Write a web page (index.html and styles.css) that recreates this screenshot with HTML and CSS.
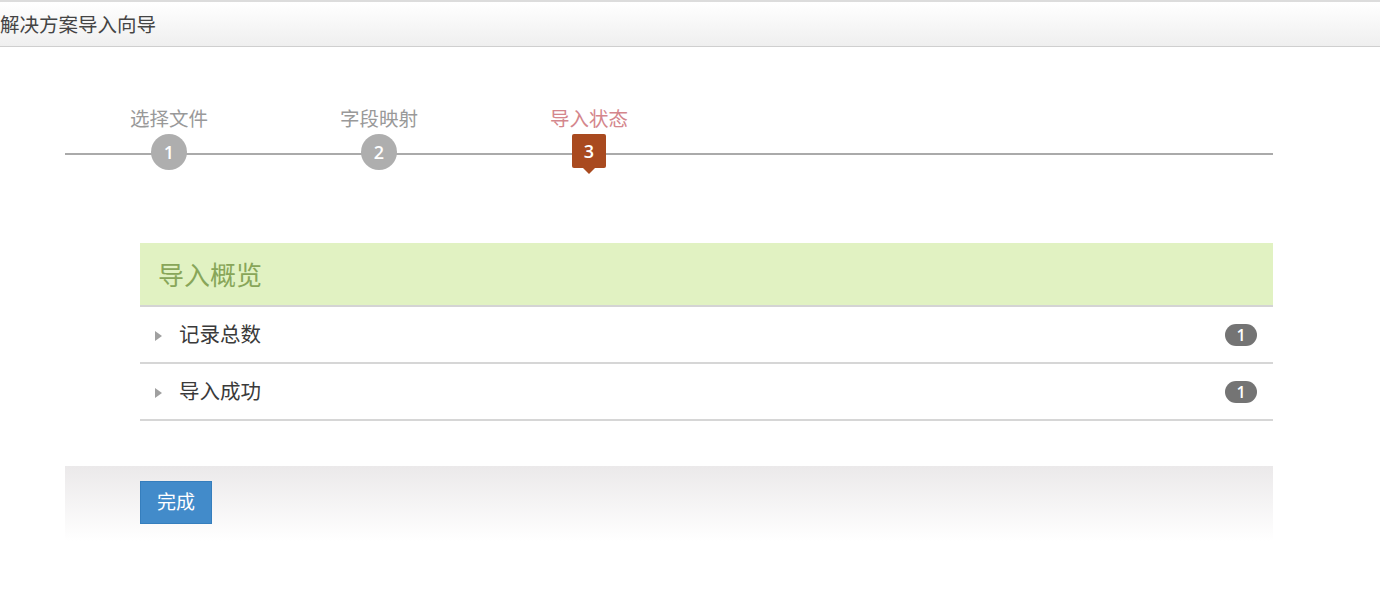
FILE: index.html
```html
<!DOCTYPE html>
<html lang="zh">
<head>
<meta charset="utf-8">
<title>解决方案导入向导</title>
<link rel="stylesheet" href="styles.css">
</head>
<body>
<div class="topbar">解决方案导入向导</div>
<div class="wizard">
  <ul class="steps">
    <li class="step done"><span class="step-label">选择文件</span><span class="step-num">1</span></li>
    <li class="step done"><span class="step-label">字段映射</span><span class="step-num">2</span></li>
    <li class="step active"><span class="step-label">导入状态</span><span class="step-num">3</span></li>
  </ul>
  <div class="panel">
    <div class="panel-head">导入概览</div>
    <div class="panel-row"><span class="caret"></span><span class="row-text">记录总数</span><span class="badge">1</span></div>
    <div class="panel-row"><span class="caret"></span><span class="row-text">导入成功</span><span class="badge">1</span></div>
  </div>
  <div class="actions">
    <button class="btn" type="button">完成</button>
  </div>
</div>
</body>
</html>
```
FILE: styles.css
```css
html, body {
  margin: 0;
  padding: 0;
  background: #fff;
}
body {
  font-family: "Noto Sans CJK SC", "Noto Sans", sans-serif;
  color: #333;
}
.topbar {
  border-top: 2px solid #dcdcdc;
  border-bottom: 1px solid #cfcfcf;
  height: 44px;
  line-height: 44px;
  font-size: 19.5px;
  color: #444;
  background: linear-gradient(#ffffff, #efefef);
}
.wizard {
  margin-left: 65px;
  width: 1208px;
}
.steps {
  list-style: none;
  margin: 54px 0 0 0;
  padding: 0;
  display: flex;
  height: 80px;
  background: linear-gradient(#aaaaaa, #aaaaaa) no-repeat 0 52px / 100% 2px;
}
.step {
  width: 210px;
  display: flex;
  flex-direction: column;
  align-items: center;
}
.step:first-child { margin-left: -1px; }
.step-label {
  font-size: 19.5px;
  line-height: 24px;
  height: 24px;
  margin-top: 5px;
  color: #999;
}
.step-num {
  margin-top: 4px;
  width: 36px;
  height: 36px;
  border-radius: 50%;
  background: #aeaeae;
  color: #fff;
  font-family: "Open Sans", "Noto Sans", sans-serif;
  font-weight: 600;
  font-size: 18px;
  line-height: 36px;
  text-align: center;
}
.step.active .step-label { color: #d4868c; }
.step.active .step-num {
  width: 34px;
  height: 34px;
  line-height: 34px;
  margin-top: 4px;
  border-radius: 2px;
  background: #a94a1f;
  position: relative;
}
.step.active .step-num::after {
  content: "";
  position: absolute;
  left: 50%;
  top: 34px;
  margin-left: -6px;
  border-left: 6px solid transparent;
  border-right: 6px solid transparent;
  border-top: 6px solid #a94a1f;
}
.panel {
  margin: 62px 0 0 75px;
  width: 1133px;
}
.panel-head {
  height: 62px;
  line-height: 62px;
  background: #e1f2c2;
  border-bottom: 2px solid #d4d4d4;
  padding-left: 18px;
  font-size: 26px;
  color: #88a659;
}
.panel-row {
  height: 55px;
  box-sizing: border-box;
  padding: 0 16px 3px 15px;
  border-bottom: 2px solid #d6d6d6;
  display: flex;
  align-items: center;
  height: 57px;
}
.caret {
  width: 0;
  height: 0;
  border-top: 5px solid transparent;
  border-bottom: 5px solid transparent;
  border-left: 7px solid #a0a0a0;
  margin-top: 6px;
  margin-right: 17px;
}
.row-text {
  flex: 1;
  font-size: 20.5px;
  color: #3a3a3a;
}
.badge {
  width: 32px;
  height: 22px;
  line-height: 22px;
  border-radius: 11px;
  background: #747474;
  color: #fff;
  text-align: center;
  font-family: "Open Sans", "Noto Sans", sans-serif;
  font-weight: 600;
  font-size: 16px;
  margin-top: 4px;
}
.actions {
  margin-top: 45px;
  height: 75px;
  box-sizing: border-box;
  padding: 15px 0 0 75px;
  background: linear-gradient(#ebe9ea, #ffffff);
}
.btn {
  width: 72px;
  height: 43px;
  background: #428bca;
  border: 1px solid #357ebd;
  color: #fff;
  font-family: "Noto Sans CJK SC", "Noto Sans", sans-serif;
  font-size: 19px;
  line-height: 38px;
  padding: 0 0 3px 0;
  cursor: pointer;
}
```
